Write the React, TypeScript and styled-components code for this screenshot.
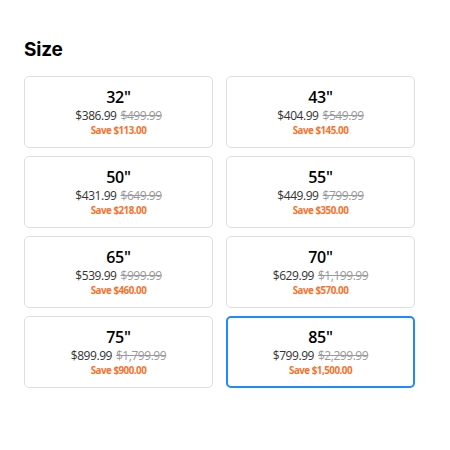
import React, { useState } from "react";
import styled, { createGlobalStyle } from "styled-components";

const Global = createGlobalStyle`
  html, body { margin: 0; padding: 0; background: #fff; }
  body { font-family: "Open Sans", "Liberation Sans", sans-serif; }
`;

const Page = styled.div`
  padding: 39px 36px 0 24px;
  width: 391px;
`;

const Title = styled.h2`
  margin: 0 0 15px 0;
  font-family: Inter, "Liberation Sans", sans-serif;
  font-size: 19px;
  font-weight: 700;
  color: #000;
  line-height: 22px;
  letter-spacing: -0.2px;
`;

const Grid = styled.div`
  display: grid;
  grid-template-columns: 1fr 1fr;
  column-gap: 13px;
  row-gap: 8px;
`;

const Card = styled.button<{ $selected: boolean }>`
  box-sizing: border-box;
  height: 72px;
  border-radius: 5px;
  border: ${(p) => (p.$selected ? "2px solid #2189ff" : "1px solid #dedede")};
  background: #fff;
  display: flex;
  flex-direction: column;
  align-items: center;
  justify-content: center;
  padding: 0;
  cursor: pointer;
  font-family: inherit;
`;

const SizeLabel = styled.div`
  font-size: 16px;
  font-weight: 600;
  color: #000;
  line-height: 19px;
  letter-spacing: -0.2px;
  margin-top: 1px;
`;

const PriceRow = styled.div`
  font-size: 12px;
  color: #333;
  line-height: 17px;
  letter-spacing: -0.45px;
  display: flex;
  gap: 4px;
`;

const Old = styled.span`
  color: #9a9a9a;
  text-decoration: line-through;
`;

const Save = styled.div`
  font-size: 9.8px;
  font-weight: 700;
  color: #f7722a;
  line-height: 14px;
  letter-spacing: -0.5px;
`;

const items = [
  { size: '32"', price: "$386.99", old: "$499.99", save: "Save $113.00" },
  { size: '43"', price: "$404.99", old: "$549.99", save: "Save $145.00" },
  { size: '50"', price: "$431.99", old: "$649.99", save: "Save $218.00" },
  { size: '55"', price: "$449.99", old: "$799.99", save: "Save $350.00" },
  { size: '65"', price: "$539.99", old: "$999.99", save: "Save $460.00" },
  { size: '70"', price: "$629.99", old: "$1,199.99", save: "Save $570.00" },
  { size: '75"', price: "$899.99", old: "$1,799.99", save: "Save $900.00" },
  { size: '85"', price: "$799.99", old: "$2,299.99", save: "Save $1,500.00" },
];

export default function App() {
  const [sel, setSel] = useState(7);
  return (
    <>
      <Global />
      <Page>
        <Title>Size</Title>
        <Grid>
          {items.map((it, i) => (
            <Card key={it.size} $selected={sel === i} onClick={() => setSel(i)}>
              <SizeLabel>{it.size}</SizeLabel>
              <PriceRow>
                <span>{it.price}</span>
                <Old>{it.old}</Old>
              </PriceRow>
              <Save>{it.save}</Save>
            </Card>
          ))}
        </Grid>
      </Page>
    </>
  );
}
